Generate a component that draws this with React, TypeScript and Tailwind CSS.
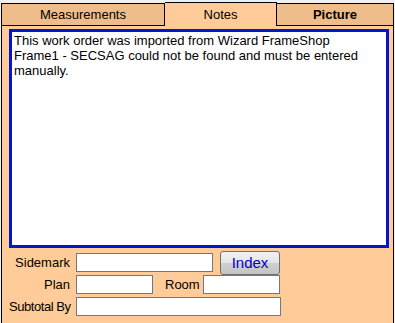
const tabBase = "flex items-center justify-center border-black text-[13px] text-black";

export default function App() {
  return (
    <div className="w-[395px] h-[323px] bg-[#f0f0f0] pt-[2px] pl-[1px] font-['Liberation_Sans',Arial,sans-serif] flex flex-col">
      {/* tabs */}
      <div className="flex items-end h-[24px] w-[393px]">
        <div className={`${tabBase} w-[164px] h-[23px] border bg-[#efbd8a]`}>Measurements</div>
        <div className={`${tabBase} w-[112px] h-[24px] border-t border-r bg-[#ffcc99]`}>Notes</div>
        <div className={`${tabBase} w-[117px] h-[23px] border-t border-r border-b bg-[#efbd8a] font-bold`}>Picture</div>
      </div>

      {/* panel */}
      <div className="w-[393px] flex-1 bg-[#ffcc99] border-l border-r border-black pl-[7px] pt-[3px]">
        <div className="w-[380px] h-[219px] bg-white border-[3px] border-[#0018cc] px-[2px] pt-[1px] text-[13px] leading-[15px] text-black">
          This work order was imported from Wizard FrameShop
          <br />
          Frame1 - SECSAG could not be found and must be entered manually.
        </div>

        <div className="flex flex-col text-[13px] text-black">
          <div className="flex items-center h-[25px] mt-[2px]">
            <span className="w-[61px] text-right">Sidemark</span>
            <input className="ml-[6px] w-[137px] h-[19px] bg-white border border-[#777] outline-none" />
            <button className="ml-[7px] w-[60px] h-[24px] rounded-[3px] border border-[#707070] bg-[linear-gradient(#f2f2f2_0%,#e4e4e4_50%,#cfcfcf_51%,#c4c4c4_100%)] text-[15px] leading-none text-[#0000cc]">
              Index
            </button>
          </div>
          <div className="flex items-center h-[19px]">
            <span className="w-[61px] text-right">Plan</span>
            <input className="ml-[6px] w-[77px] h-[19px] bg-white border border-[#777] outline-none" />
            <span className="ml-[12px] w-[35px]">Room</span>
            <input className="ml-[3px] w-[77px] h-[19px] bg-white border border-[#777] outline-none" />
          </div>
          <div className="flex items-center h-[19px] mt-[3px]">
            <span className="w-[61px] text-right whitespace-nowrap tracking-[-0.45px]">Subtotal By</span>
            <input className="ml-[6px] w-[205px] h-[19px] bg-white border border-[#777] outline-none" />
          </div>
        </div>
      </div>
    </div>
  );
}
